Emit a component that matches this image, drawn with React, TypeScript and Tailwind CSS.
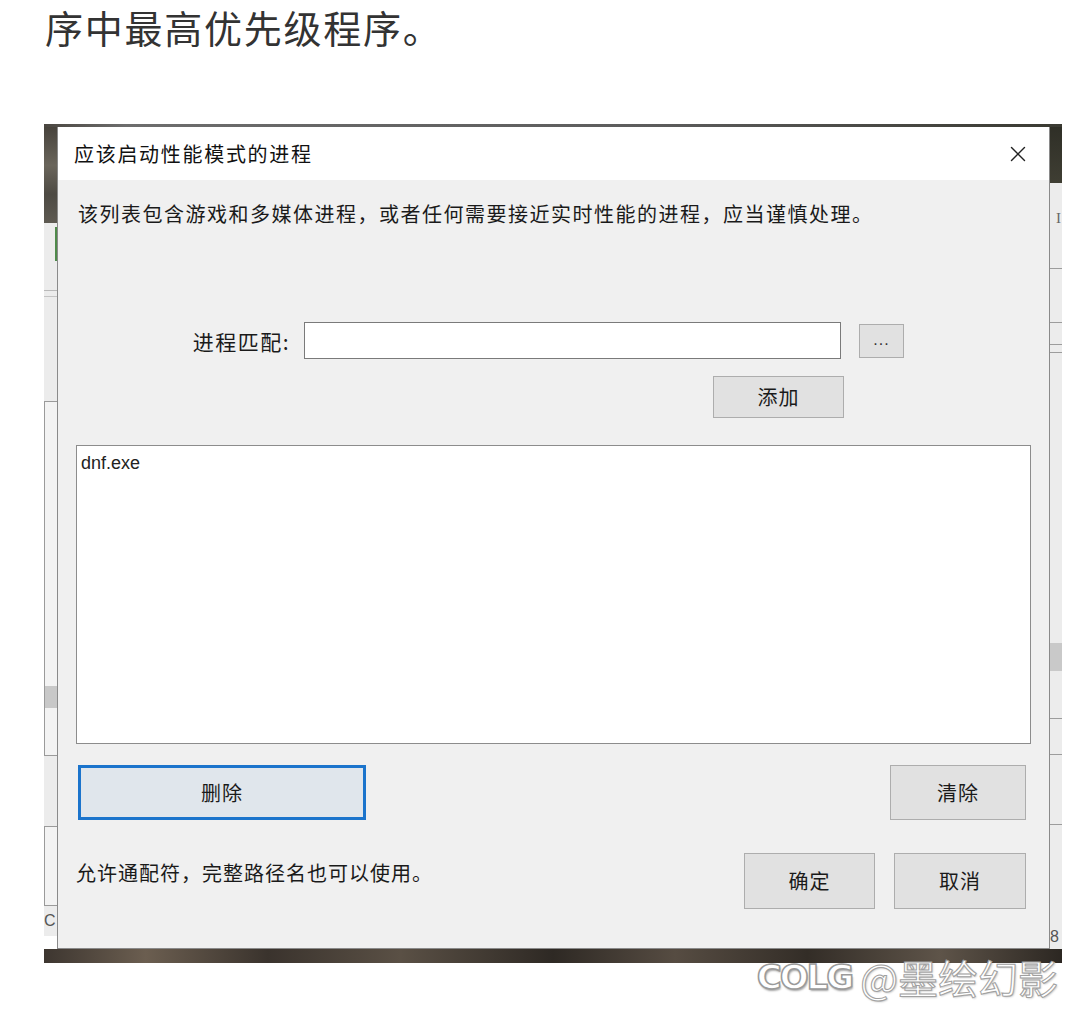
import { X } from 'lucide-react'

const cjk = "font-['Noto_Sans_CJK_SC','Microsoft_YaHei',sans-serif]"

function WinButton({ label, className }: { label: string, className?: string }) {
    return (
        <div
            className={`flex items-center justify-center border border-[#adadad] bg-[#e1e1e1] text-[20px] leading-[24px] tracking-[1px] text-[#1a1a1a] ${className ?? ''}`}>
            {label}
        </div>
    )
}

function LeftStrip() {
    return (
        <div className="flex w-[13px] flex-col">
            <div className="h-[96px] bg-[linear-gradient(180deg,#47433c_0%,#6a655b_40%,#4d4a43_70%,#5e5a52_100%)]"></div>
            <div className="flex h-[50px] bg-[#ececec]">
                <div className="ml-auto mt-[4px] h-[34px] w-[2px] bg-[#4f8a4a]"></div>
            </div>
            <div className="h-[18px] border-b border-[#b9b9b9] bg-[#ececec]"></div>
            <div className="h-[6px] border-b border-[#c4c4c4] bg-[#ececec]"></div>
            <div className="h-[104px] bg-[#ececec]"></div>
            <div className="h-[355px] border-y border-l border-[#9a9a9a] bg-[#f3f3f3] pl-[6px]">
                <div className="ml-[-6px] mt-[284px] h-[22px] bg-[#c8c8c8]"></div>
            </div>
            <div className="h-[70px] bg-[#ececec]"></div>
            <div className="h-[80px] border-y border-l border-[#9a9a9a] bg-[#f3f3f3]"></div>
            <div className="flex h-[30px] items-center bg-[#ececec] font-['Liberation_Sans',sans-serif] text-[16px] leading-none text-[#555]">C</div>
        </div>
    )
}

function RightStrip() {
    return (
        <div className="flex w-[12px] flex-col">
            <div className="h-[56px] bg-[linear-gradient(180deg,#2f2f27_0%,#3f3e33_100%)]"></div>
            <div className="flex h-[70px] items-center justify-end bg-[#ececec] pr-[1px] font-['Liberation_Serif',serif] text-[15px] leading-none text-[#666]">I</div>
            <div className="h-[16px] border-b border-[#9c9c9c] bg-[#ececec]"></div>
            <div className="h-[54px] border-b border-[#9c9c9c] bg-[#ececec]"></div>
            <div className="h-[22px] border-b border-[#9c9c9c] bg-[#ececec]"></div>
            <div className="h-[8px] border-b border-[#9c9c9c] bg-[#ececec]"></div>
            <div className="h-[290px] bg-[#ececec]"></div>
            <div className="h-[28px] bg-[#c9c9c9]"></div>
            <div className="h-[48px] border-b border-[#9c9c9c] bg-[#ececec]"></div>
            <div className="h-[36px] border-b border-[#9c9c9c] bg-[#ececec]"></div>
            <div className="h-[70px] border-b border-[#9c9c9c] bg-[#ececec]"></div>
            <div className="flex h-[124px] items-end bg-[#ececec] pb-[4px] font-['Liberation_Sans',sans-serif] text-[16px] leading-none text-[#555]">8</div>
        </div>
    )
}

function Dialog() {
    return (
        <div className={`flex w-[993px] flex-col border-x border-b border-[#8a8a8a] bg-[#f0f0f0] ${cjk}`}>
            <div className="flex h-[53px] items-center justify-between bg-white pl-[16px] pr-[18px]">
                <span className="text-[20px] leading-[24px] tracking-[1.7px] text-[#111]">应该启动性能模式的进程</span>
                <X className="h-[26px] w-[26px] text-[#222]" strokeWidth={1.3} />
            </div>

            <div className="pl-[20px] pt-[22px] text-[20px] leading-[24px] tracking-[1.5px] text-[#1a1a1a]">
                该列表包含游戏和多媒体进程，或者任何需要接近实时性能的进程，应当谨慎处理。
            </div>

            <div className="mt-[96px] flex h-[37px] items-center">
                <span className="w-[232px] text-right text-[21px] leading-[24px] tracking-[1.5px] text-[#1a1a1a]">进程匹配:</span>
                <div className="ml-[14px] h-[37px] w-[537px] border border-[#7a7a7a] bg-white"></div>
                <div className="ml-[18px] flex h-[34px] w-[45px] items-center justify-center border border-[#adadad] bg-[#e1e1e1] pb-[2px] font-['Liberation_Sans',sans-serif] text-[16px] leading-none tracking-[1px] text-[#333]">
                    ...
                </div>
            </div>

            <div className="mt-[17px] flex pl-[655px]">
                <WinButton label="添加" className="h-[42px] w-[131px]" />
            </div>

            <div className="ml-[18px] mt-[27px] h-[299px] w-[955px] border border-[#8c8c8c] bg-white px-[4px] pt-[4px] font-['Liberation_Sans',sans-serif] text-[18px] leading-[26px] text-[#222]">
                dnf.exe
            </div>

            <div className="mt-[21px] flex items-start justify-between pl-[20px] pr-[23px]">
                <div className="flex h-[55px] w-[288px] items-center justify-center border-[3px] border-[#1b74cc] bg-[#e0e6ec] text-[20px] leading-[24px] tracking-[1px] text-[#1a1a1a]">
                    删除
                </div>
                <WinButton label="清除" className="h-[55px] w-[136px]" />
            </div>

            <div className="mt-[33px] flex items-start pl-[18px] pr-[23px]">
                <span className="mt-[8px] text-[20px] leading-[24px] tracking-[1px] text-[#1a1a1a]">
                    允许通配符，完整路径名也可以使用。
                </span>
                <div className="ml-auto flex gap-[19px]">
                    <WinButton label="确定" className="h-[56px] w-[131px]" />
                    <WinButton label="取消" className="h-[56px] w-[132px]" />
                </div>
            </div>

            <div className="h-[36px]"></div>
        </div>
    )
}

export default function App() {
    return (
        <div className="min-h-[1017px] w-[1080px] bg-white">
            <h1 className={`pl-[45px] pt-[4px] text-[38px] font-normal leading-[46px] tracking-[1.75px] text-[#333] ${cjk}`}>
                序中最高优先级程序。
            </h1>

            <div className="ml-[44px] mt-[74px] w-[1018px]">
                <div className="h-[3px] bg-[linear-gradient(90deg,#4a4640,#6d6d6d_8%,#5c5c5c_60%,#3a3a32)]"></div>
                <div className="flex">
                    <LeftStrip />
                    <Dialog />
                    <RightStrip />
                </div>
                <div className="h-[14px] bg-[linear-gradient(90deg,#3d3630_0%,#6b5e50_10%,#3a332d_22%,#5a5045_35%,#2e2924_50%,#564c42_62%,#332d27_75%,#5e5449_88%,#2c2722_100%)]"></div>
            </div>

            <div className="relative -mt-[8px] flex items-center justify-end pr-[22px]">
                <span className="mr-[8px] font-['DejaVu_Sans',sans-serif] text-[34px] font-bold leading-[44px] tracking-[-2px] text-white [-webkit-text-stroke:1.5px_#9a9a9a] [text-shadow:1px_2px_2px_rgba(0,0,0,0.35)]">
                    COLG
                </span>
                <span className={`text-[40px] leading-[44px] text-white [-webkit-text-stroke:1px_#a0a0a0] [text-shadow:1px_1px_2px_rgba(0,0,0,0.25)] ${cjk}`}>
                    @墨绘幻影
                </span>
            </div>
        </div>
    )
}
